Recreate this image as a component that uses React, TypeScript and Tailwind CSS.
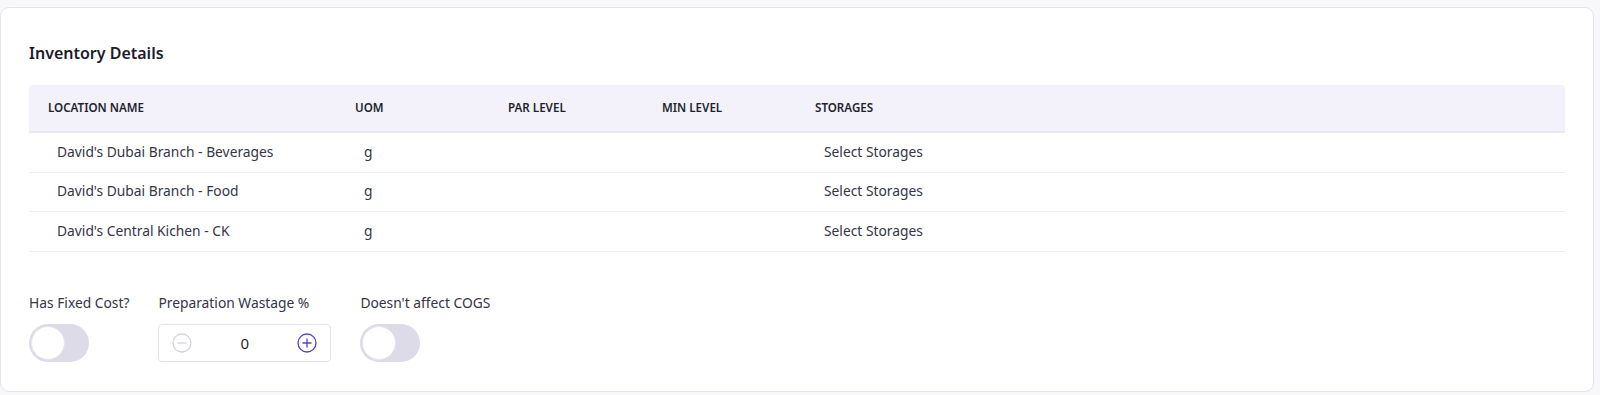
import React, { useState } from 'react';

const rows = [
  { name: "David's Dubai Branch - Beverages", uom: 'g' },
  { name: "David's Dubai Branch - Food", uom: 'g' },
  { name: "David's Central Kichen - CK", uom: 'g' },
];

const cols = 'grid grid-cols-[307px_153px_154px_153px_1fr]';

const Toggle: React.FC<{ on: boolean; onChange: () => void }> = ({ on, onChange }) => (
  <button
    onClick={onChange}
    className={`w-[60px] h-[38px] rounded-full p-[2px] flex items-center ${on ? 'bg-[#5b3fd1] justify-end' : 'bg-[#dddbe7] justify-start'}`}
  >
    <span className="w-[34px] h-[34px] rounded-full bg-white border border-[#e6e5ee]" />
  </button>
);

const App: React.FC = () => {
  const [fixedCost, setFixedCost] = useState(false);
  const [noCogs, setNoCogs] = useState(false);
  const [wastage, setWastage] = useState(0);

  return (
    <div className="bg-[#f8f8fb] pt-[7px] pr-[6px] pb-[4px] font-['Noto_Sans',sans-serif]">
      <div className="bg-white border border-[#e3e3ea] rounded-[9px] h-[385px] pt-[34px] pl-[28px] pr-[28px]">
        <h2 className="text-[16px] leading-[22px] font-semibold text-[#1b1b2b]">Inventory Details</h2>

        <div className="mt-[21px]">
          <div className={`${cols} h-[48px] items-center bg-[#f3f2fa] border-b-2 border-[#e9e8f0] rounded-t-[4px] text-[11.6px] font-semibold text-[#1f1f2e] pl-[19px]`}>
            <div>LOCATION NAME</div>
            <div>UOM</div>
            <div>PAR LEVEL</div>
            <div>MIN LEVEL</div>
            <div>STORAGES</div>
          </div>
          {rows.map((r) => (
            <div
              key={r.name}
              className={`${cols} h-[39.5px] items-center border-b border-[#ececf1] text-[13.8px] text-[#343443] pl-[28px]`}
            >
              <div>{r.name}</div>
              <div>{r.uom}</div>
              <div />
              <div />
              <div>Select Storages</div>
            </div>
          ))}
        </div>

        <div className="mt-[42px] flex gap-[29px] text-[13.8px] leading-[18px] text-[#343443]">
          <div className="flex flex-col gap-[12px]">
            <span>Has Fixed Cost?</span>
            <Toggle on={fixedCost} onChange={() => setFixedCost(!fixedCost)} />
          </div>
          <div className="flex flex-col gap-[12px]">
            <span>Preparation Wastage %</span>
            <div className="w-[173px] h-[38px] border border-[#e2e2ea] rounded-[4px] flex items-center justify-between px-[13px]">
              <button onClick={() => setWastage(Math.max(0, wastage - 1))} className="text-[#d3d3dc]">
                <svg width="20" height="20" viewBox="0 0 20 20" fill="none" stroke="currentColor" strokeWidth="1.3">
                  <circle cx="10" cy="10" r="9" />
                  <path d="M5.5 10h9" />
                </svg>
              </button>
              <span className="text-[15px] text-[#1f1f2e]">{wastage}</span>
              <button onClick={() => setWastage(wastage + 1)} className="text-[#5b3fd1]">
                <svg width="20" height="20" viewBox="0 0 20 20" fill="none" stroke="currentColor" strokeWidth="1.3">
                  <circle cx="10" cy="10" r="9" />
                  <path d="M5.5 10h9M10 5.5v9" />
                </svg>
              </button>
            </div>
          </div>
          <div className="flex flex-col gap-[12px]">
            <span>Doesn't affect COGS</span>
            <Toggle on={noCogs} onChange={() => setNoCogs(!noCogs)} />
          </div>
        </div>
      </div>
    </div>
  );
};

export default App;
